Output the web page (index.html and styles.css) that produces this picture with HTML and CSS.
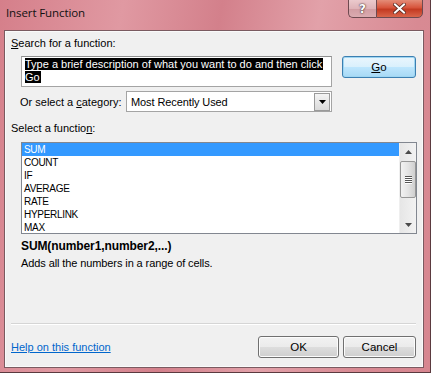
FILE: index.html
```html
<!DOCTYPE html>
<html>
<head>
<meta charset="utf-8">
<link rel="stylesheet" href="styles.css">
</head>
<body>
<div class="window">
  <div class="titlebar">
    <span class="title">Insert Function</span>
    <div class="caption-btns">
      <div class="cb help">?</div>
      <div class="cb close">
        <svg width="13" height="11" viewBox="0 0 13 11"><path d="M2 1.5 L11 9.5 M11 1.5 L2 9.5" stroke="#5a2a22" stroke-width="3.6" stroke-linecap="square"/><path d="M2 1.5 L11 9.5 M11 1.5 L2 9.5" stroke="#fff" stroke-width="2" stroke-linecap="square"/></svg>
      </div>
    </div>
  </div>
  <div class="client">
    <div class="lbl"><u>S</u>earch for a function:</div>
    <div class="search-row">
      <div class="searchbox"><span class="sel">Type a brief description of what you want to do and then click</span><br><span class="sel">Go</span></div>
      <div class="btn go"><span><u>G</u>o</span></div>
    </div>
    <div class="cat-row">
      <span class="cat-lbl">Or select a <u>c</u>ategory:</span>
      <div class="combo"><span class="combo-text">Most Recently Used</span><div class="combo-arrow"><svg width="7" height="4" viewBox="0 0 7 4"><path d="M0 0 H7 L3.5 4 Z" fill="#000"/></svg></div></div>
    </div>
    <div class="lbl select-lbl">Select a functio<u>n</u>:</div>
    <div class="listbox">
      <ul class="items">
        <li class="selected">SUM</li>
        <li>COUNT</li>
        <li>IF</li>
        <li>AVERAGE</li>
        <li>RATE</li>
        <li>HYPERLINK</li>
        <li>MAX</li>
      </ul>
      <div class="scrollbar">
        <div class="sb-arrow"><svg width="7" height="4" viewBox="0 0 7 4"><path d="M0 4 H7 L3.5 0 Z" fill="#4a4a4a"/></svg></div>
        <div class="sb-track">
          <div class="sb-thumb"><span class="grip"></span><span class="grip"></span><span class="grip"></span><span class="grip"></span></div>
        </div>
        <div class="sb-arrow"><svg width="7" height="4" viewBox="0 0 7 4"><path d="M0 0 H7 L3.5 4 Z" fill="#4a4a4a"/></svg></div>
      </div>
    </div>
    <div class="sig">SUM(number1,number2,...)</div>
    <div class="desc">Adds all the numbers in a range of cells.</div>
    <div class="sep"></div>
    <div class="bottom">
      <a class="help-link" href="#">Help on this function</a>
      <div class="buttons">
        <div class="btn ok"><span>OK</span></div>
        <div class="btn cancel"><span>Cancel</span></div>
      </div>
    </div>
  </div>
</div>
</body>
</html>
```
FILE: styles.css
```css
* { box-sizing: border-box; }
html, body { margin: 0; padding: 0; }
body {
  width: 431px;
  height: 373px;
  overflow: hidden;
  font-family: "Liberation Sans", Arial, sans-serif;
  font-size: 11px;
  color: #000;
  background: #fff;
}
.window {
  width: 431px;
  height: 373px;
  background: linear-gradient(100deg, #d57f8a 0%, #e099a2 25%, #d3808b 45%, #e2a1a9 65%, #d88a93 85%, #d78690 100%);
  border-right: 1px solid #5b3a3f;
  border-bottom: 1px solid #5b3a3f;
  display: flex;
  flex-direction: column;
  padding: 0 6px 4px 4px;
}
.titlebar {
  height: 30px;
  display: flex;
  align-items: flex-start;
  justify-content: space-between;
}
.title {
  font-family: "Open Sans", "Liberation Sans", sans-serif;
  font-size: 11.5px;
  color: #111;
  margin-top: 5px;
  margin-left: 2px;
  letter-spacing: -0.1px;
}
.caption-btns {
  display: flex;
  margin-right: 1px;
  margin-top: -1px;
}
.cb {
  height: 19px;
  border: 1px solid #6e4a50;
  display: flex;
  align-items: center;
  justify-content: center;
}
.cb.help {
  width: 28px;
  border-radius: 0 0 0 5px;
  border-right: none;
  background: linear-gradient(#ebcacd 0%, #dfb3b8 50%, #d19ca2 51%, #dbabb0 100%);
  color: #fff;
  font-family: "DejaVu Sans", sans-serif;
  font-weight: bold;
  font-size: 12px;
  text-shadow: 0 0 2px #3a2a2a, 0 0 1px #3a2a2a;
}
.cb.close {
  width: 47px;
  border-radius: 0 0 5px 0;
  background: linear-gradient(#e48c78 0%, #d7543c 45%, #c33a22 55%, #d9654b 100%);
}
.client {
  flex: 1;
  background: #f0f0f0;
  border: 1px solid #7a5a60;
  box-shadow: inset 0 0 0 1px #fafafa;
  padding: 5px 6px 0 6px;
  display: flex;
  flex-direction: column;
}
.lbl {
  height: 14px;
  line-height: 14px;
}
.search-row {
  display: flex;
  align-items: flex-start;
  margin-top: 6px;
  padding-left: 10px;
}
.searchbox {
  width: 311px;
  height: 31px;
  background: #fff;
  border: 1px solid #a4a4a4;
  border-top-color: #8e8f8f;
  padding: 1px 0 0 3px;
  line-height: 13px;
  font-size: 11px;
  white-space: nowrap;
  overflow: hidden;
}
.sel {
  background: #000;
  color: #fff;
  padding: 0 1px 0 0;
}
.btn {
  height: 22px;
  border: 1px solid #707070;
  border-radius: 3px;
  background: linear-gradient(#f2f2f2 0%, #ebebeb 50%, #dddddd 51%, #cfcfcf 100%);
  box-shadow: inset 0 0 0 1px #fcfcfc;
  display: flex;
  align-items: center;
  justify-content: center;
  font-size: 11.5px;
}
.btn.go {
  width: 74px;
  margin-left: 10px;
  border-color: #3c7fb1;
  box-shadow: inset 0 0 0 1px #9fd6f2;
  background: linear-gradient(#eaf6fd 0%, #d9f0fc 50%, #bee6fd 51%, #a7d9f5 100%);
}
.cat-row {
  display: flex;
  align-items: center;
  margin-top: 4px;
  padding-left: 9px;
  height: 21px;
}
.cat-lbl {
  width: 106px;
}
.combo {
  width: 206px;
  height: 21px;
  background: #fff;
  border: 1px solid #a4a4a4;
  display: flex;
  align-items: center;
  justify-content: space-between;
  padding: 0 1px 0 4px;
}
.combo-text { letter-spacing: -0.1px; }
.combo-arrow {
  width: 16px;
  height: 18px;
  border: 1px solid #9a9a9a;
  background: linear-gradient(#f4f4f4, #dadada);
  display: flex;
  align-items: center;
  justify-content: center;
}
.select-lbl { margin-top: 9px; }
.listbox {
  margin: 7px 0 0 10px;
  width: 396px;
  height: 92px;
  border: 1px solid #828790;
  background: #fff;
  display: flex;
}
.items {
  list-style: none;
  margin: 0;
  padding: 0;
  flex: 1;
  font-size: 10px;
}
.items li {
  height: 13px;
  line-height: 13px;
  padding-left: 2px;
  letter-spacing: -0.3px;
}
.items li.selected {
  background: #3399ff;
  color: #fff;
}
.scrollbar {
  width: 17px;
  background: linear-gradient(90deg, #e6e6e6, #f2f2f2);
  display: flex;
  flex-direction: column;
  border-left: 1px solid #efefef;
}
.sb-arrow {
  height: 17px;
  display: flex;
  align-items: center;
  justify-content: center;
}
.sb-track {
  flex: 1;
  display: flex;
  flex-direction: column;
}
.sb-thumb {
  margin-top: 1px;
  height: 37px;
  border: 1px solid #979797;
  border-radius: 2px;
  background: linear-gradient(90deg, #f2f2f2, #e4e4e4 50%, #cfcfcf);
  display: flex;
  flex-direction: column;
  align-items: center;
  justify-content: center;
  gap: 1px;
}
.grip {
  width: 7px;
  height: 1px;
  background: #555;
  box-shadow: 0 1px 0 #fff;
}
.sig {
  margin-top: 5px;
  padding-left: 10px;
  font-weight: bold;
  height: 14px;
  line-height: 14px;
  font-size: 12px;
  letter-spacing: -0.1px;
}
.desc {
  margin-top: 3px;
  padding-left: 10px;
  height: 14px;
  line-height: 14px;
  letter-spacing: -0.1px;
}
.sep {
  margin-top: 53px;
  height: 2px;
  border-top: 1px solid #d5d5d5;
  border-bottom: 1px solid #fff;
  margin-right: 1px;
}
.bottom {
  display: flex;
  justify-content: space-between;
  align-items: center;
  margin-top: 11px;
}
.help-link {
  color: #0066cc;
  text-decoration: underline;
  font-size: 11px;
}
.buttons {
  display: flex;
  gap: 4px;
  margin-right: 1px;
}
.btn.ok { width: 81px; }
.btn.cancel { width: 73px; }
```
